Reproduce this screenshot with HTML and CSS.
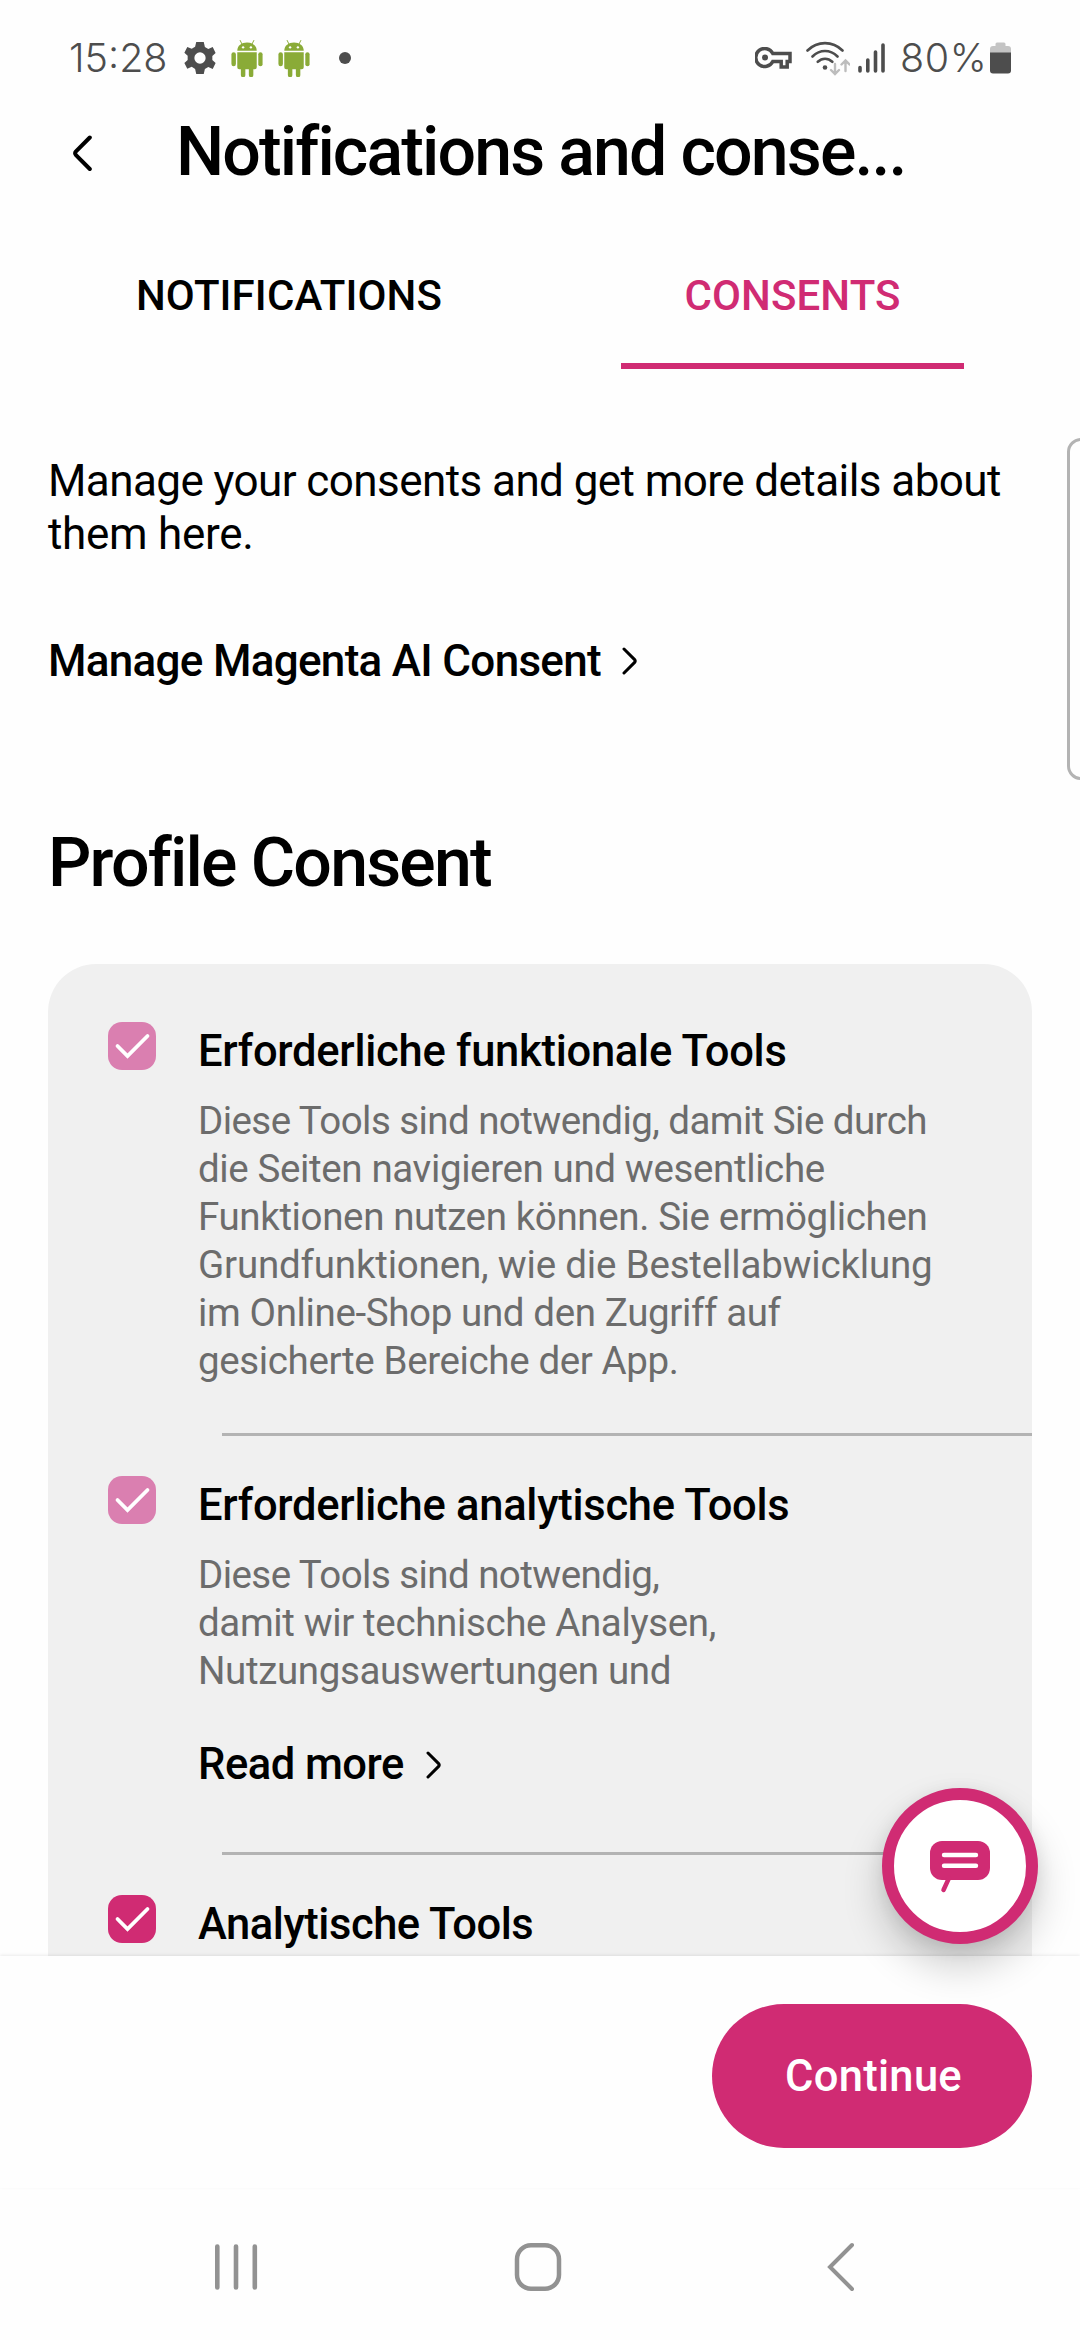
FILE: index.html
```html
<!DOCTYPE html>
<html lang="en">
<head>
<meta charset="utf-8">
<title>Notifications and consents</title>
<link rel="stylesheet" href="styles.css">
</head>
<body>
<div class="screen">
  <div class="status">
    <div class="status-left">
      <span class="clock">15:28</span>
      <svg class="gear" width="32" height="34" viewBox="0 0 34 36" fill="#4d4d4d"><path fill-rule="evenodd" d="M13 1h8l1.200 5.200 3.600 2.200 4.700-2 3.100 6.200-3.500 3.200v4.400l3.500 3.200-3.100 6.200-4.700-2-3.600 2.200L21 35h-8l-1.200-5.400-3.600-2.200-4.700 2L.4 23.200l3.500-3.200v-4.400L.4 12.400l3.100-6.200 4.700 2 3.600-2.200zM17 12a6 6 0 1 0 0 12 6 6 0 0 0 0-12z"/></svg>
      <svg class="droid" width="32" height="37" viewBox="0 0 32 38" fill="#8aab37"><path d="M6 11C6 5.500 10.500 2.500 16 2.500S26 5.500 26 11z"/><path d="M9 .5l2 4M23 .5l-2 4" stroke="#8aab37" stroke-width="1" stroke-linecap="round"/><circle cx="12" cy="7.500" r="1.200" fill="#fff"/><circle cx="20" cy="7.500" r="1.200" fill="#fff"/><path d="M6 12.500h20V28a2 2 0 0 1-2 2H22.500v6a2.300 2.300 0 0 1-4.600 0v-6h-3.600v6a2.300 2.300 0 0 1-4.600 0v-6H8a2 2 0 0 1-2-2z"/><rect y="12.500" width="4.600" height="14.500" rx="2.300"/><rect x="27.600" y="12.500" width="4.400" height="14.500" rx="2.200"/></svg>
      <svg class="droid" width="32" height="37" viewBox="0 0 32 38" fill="#8aab37"><path d="M6 11C6 5.500 10.500 2.500 16 2.500S26 5.500 26 11z"/><path d="M9 .5l2 4M23 .5l-2 4" stroke="#8aab37" stroke-width="1" stroke-linecap="round"/><circle cx="12" cy="7.500" r="1.200" fill="#fff"/><circle cx="20" cy="7.500" r="1.200" fill="#fff"/><path d="M6 12.500h20V28a2 2 0 0 1-2 2H22.500v6a2.300 2.300 0 0 1-4.600 0v-6h-3.600v6a2.300 2.300 0 0 1-4.600 0v-6H8a2 2 0 0 1-2-2z"/><rect y="12.500" width="4.600" height="14.500" rx="2.300"/><rect x="27.600" y="12.500" width="4.400" height="14.500" rx="2.200"/></svg>
      <span class="dot"></span>
    </div>
    <div class="status-right">
      <svg width="37" height="22" viewBox="0 0 37 22" fill="none" stroke="#4d4d4d"><path d="M17.800 6.500H35v8h-2.800v5.600h-6V14.500h-8.400A9 9 0 1 1 17.800 6.500z" stroke-width="3.500"/><circle cx="10" cy="10.500" r="3" fill="#4d4d4d" stroke="none"/></svg>
      <svg class="wifi" width="44" height="36" viewBox="0 0 44 36" fill="none" stroke-linecap="round"><g stroke="#4d4d4d" stroke-width="2.600"><path d="M1.500 10.500C11.500.7 26.500.7 36.500 10.500M6.500 16.500c7.500-7.300 17.500-7.300 25 0M11.800 21.800c4.300-4 10.200-4 14.500 0"/></g><circle cx="19" cy="27.500" r="2.300" fill="#4d4d4d"/><path d="M29 24V33.500M25 30l4 4 4-4M39.500 31V20.500M35.500 24.500l4-4 4 4" stroke="#bdbdbd" stroke-width="2.400"/></svg>
      <svg class="bars" width="27" height="32" viewBox="0 0 27 32" fill="none" stroke="#4d4d4d" stroke-width="3.600" stroke-linecap="round"><path d="M2 25.500V29M9.800 18V29M17.500 10V29M25 3V29"/></svg>
      <span class="percent">80%</span>
      <svg width="21" height="32" viewBox="0 0 21 32"><path fill="#c4c4c4" d="M5.500 4V2a1.500 1.500 0 0 1 1.500-1.500h7A1.500 1.500 0 0 1 15.500 2v2H18a3 3 0 0 1 3 3v4H0V7a3 3 0 0 1 3-3z"/><path fill="#4d4d4d" d="M0 10.500h21v18a3 3 0 0 1-3 3H3a3 3 0 0 1-3-3z"/></svg>
    </div>
  </div>

  <div class="header">
    <svg width="20" height="38" viewBox="0 0 20 38" fill="none" stroke="#000" stroke-width="4" stroke-linecap="round"><path d="M16.800 3.500 3 17.300q-1.700 1.900 0 3.800L16.800 35"/></svg>
    <h1>Notifications and conse...</h1>
  </div>

  <div class="tabs">
    <div class="tab">NOTIFICATIONS</div>
    <div class="tab active">CONSENTS</div>
  </div>

  <div class="content">
    <p class="intro">Manage your consents and get more details about<br><span class="intro-end">them here.</span></p>
    <div class="link manage"><span>Manage Magenta AI Consent</span><svg width="16" height="28" viewBox="0 0 16 28" fill="none" stroke="#000" stroke-width="3" stroke-linecap="round"><path d="M2 2l10.600 10.600q1.200 1.400 0 2.800L2 26"/></svg></div>
    <h2>Profile Consent</h2>

    <div class="card">
      <div class="item first">
        <svg class="check soft" width="48" height="48" viewBox="0 0 48 48"><path d="M9.500 24l10 10L39.500 14" fill="none" stroke="#fff" stroke-width="3.800" stroke-linecap="round"/></svg>
        <div class="text">
          <h3>Erforderliche funktionale Tools</h3>
          <p><span class="tight">Diese Tools sind notwendig, damit Sie durch</span><br>die Seiten navigieren und wesentliche<br>Funktionen nutzen können. Sie ermöglichen<br><span class="wide">Grundfunktionen, wie die Bestellabwicklung</span><br>im Online-Shop und den Zugriff auf<br>gesicherte Bereiche der App.</p>
        </div>
      </div>
      <div class="divider"></div>
      <div class="item more">
        <svg class="check soft" width="48" height="48" viewBox="0 0 48 48"><path d="M9.500 24l10 10L39.500 14" fill="none" stroke="#fff" stroke-width="3.800" stroke-linecap="round"/></svg>
        <div class="text">
          <h3>Erforderliche analytische Tools</h3>
          <p><span class="tight">Diese Tools sind notwendig,</span><br>damit wir technische Analysen,<br>Nutzungsauswertungen und</p>
          <div class="link read"><span>Read more</span><svg width="16" height="28" viewBox="0 0 16 28" fill="none" stroke="#000" stroke-width="3" stroke-linecap="round"><path d="M2 2l10.600 10.600q1.200 1.400 0 2.800L2 26"/></svg></div>
        </div>
      </div>
      <div class="divider"></div>
      <div class="item">
        <svg class="check" width="48" height="48" viewBox="0 0 48 48"><path d="M9.500 24l10 10L39.500 14" fill="none" stroke="#fff" stroke-width="3.800" stroke-linecap="round"/></svg>
        <div class="text analytics"><h3>Analytische Tools</h3></div>
      </div>
    </div>
  </div>

  <div class="footer">
    <div class="button">Continue</div>
  </div>

  <div class="nav">
    <svg width="44" height="50" viewBox="0 0 44 50" fill="none" stroke="#929292" stroke-width="4.600" stroke-linecap="round"><path d="M3.300 4.500v41M22 4.500v41M40.800 4.500v41"/></svg>
    <svg class="home" width="48" height="50" viewBox="0 0 48 50" fill="none" stroke="#929292" stroke-width="4.500"><rect x="3" y="3.200" width="42" height="43.500" rx="14"/></svg>
    <svg width="28" height="50" viewBox="0 0 28 50" fill="none" stroke="#929292" stroke-width="4" stroke-linecap="round"><path d="M25 3 3 25l22 22"/></svg>
  </div>

  <div class="edge-handle"></div>
  <div class="fab">
    <svg width="60" height="52" viewBox="0 0 60 52"><rect width="60" height="39" rx="12" fill="#d02b73"/><path d="M19 37l-5.500 12" stroke="#d02b73" stroke-width="4.500" stroke-linecap="round"/><path d="M14 14h32M14 24.700h32" stroke="#fff" stroke-width="4.400" stroke-linecap="round"/></svg>
  </div>
</div>
</body>
</html>
```
FILE: styles.css
```css
* { box-sizing: border-box; }

body {
  margin: 0;
  background: #fefefe;
  color: #000;
  font-family: Roboto, "Noto Sans", sans-serif;
}

svg { display: block; flex: none; }

h1, h2, h3, p { margin: 0; font-weight: 500; }

.screen {
  position: relative;
  display: flex;
  flex-direction: column;
  width: 1080px;
  height: 2340px;
  overflow: hidden;
}

/* system status bar */
.status {
  display: flex;
  justify-content: space-between;
  align-items: center;
  height: 116px;
  padding: 0 69px;
  color: #4d4d4d;
  font-family: Inter, Roboto, sans-serif;
  font-size: 39.5px;
  font-weight: 300;
}

.status-left, .status-right { display: flex; align-items: center; }
.clock { width: 99px; white-space: nowrap; }
.gear { margin-left: 16px; }
.droid { margin-left: 15px; }
.dot { width: 12px; height: 12px; margin-left: 29px; border-radius: 50%; background: #4d4d4d; }
.wifi { margin-left: 14px; }
.bars { margin-left: 8px; }
.percent { width: 90px; margin-left: 15px; letter-spacing: 0.6px; white-space: nowrap; }

/* app bar */
.header {
  display: flex;
  align-items: center;
  height: 73px;
  padding-left: 73px;
}

h1 {
  margin-left: 83px;
  font-size: 68px;
  line-height: 73px;
  letter-spacing: -1.88px;
  white-space: nowrap;
}

.tabs {
  display: flex;
  gap: 161px;
  height: 180px;
  padding-left: 118px;
}

.tab {
  width: 342px;
  padding-top: 82px;
  font-size: 42px;
  font-weight: 500;
  line-height: 50px;
  letter-spacing: 0.12px;
  text-align: center;
}

.tab.active { width: 343px; color: #d02b73; border-bottom: 6px solid #d02b73; }

.content {
  flex: none;
  height: 1587px;
  padding: 86px 48px 0;
  overflow: hidden;
}

.intro {
  font-size: 44px;
  font-weight: 400;
  line-height: 53px;
  letter-spacing: -0.57px;
  white-space: nowrap;
}

.intro-end { letter-spacing: -0.3px; }

.link { display: flex; align-items: center; font-weight: 500; white-space: nowrap; }

.manage {
  gap: 21px;
  margin-top: 73px;
  font-size: 44px;
  line-height: 54px;
  letter-spacing: -0.7px;
}

h2 {
  margin: 135px 0 61px;
  font-size: 68px;
  line-height: 80px;
  letter-spacing: -1.8px;
}

.card {
  height: 1100px;
  border-radius: 48px;
  background: #f0f0f0;
}

.item { display: flex; gap: 42px; padding: 40px 0 48px 60px; }
.item.first { padding-top: 58px; }
.item.more { padding-bottom: 62px; }

.check { border-radius: 14px; background: #d02b73; }
.check.soft { background: #da7fb0; }

.text { padding-top: 5px; }

h3 {
  font-size: 43.5px;
  line-height: 50px;
  letter-spacing: -0.26px;
  white-space: nowrap;
}

.analytics { letter-spacing: -0.45px; }
.analytics h3 { letter-spacing: inherit; }

.text p {
  margin-top: 20px;
  color: #6c6c6c;
  font-size: 38.5px;
  font-weight: 400;
  line-height: 48px;
  letter-spacing: -0.37px;
  white-space: nowrap;
}

.text .tight { letter-spacing: -0.56px; }
.text .wide { letter-spacing: -0.18px; }

.read {
  gap: 22px;
  margin-top: 45px;
  font-size: 43.5px;
  line-height: 50px;
  letter-spacing: -0.5px;
}

.divider { height: 3px; margin-left: 174px; background: #b3b3b3; }

/* action bar */
.footer {
  display: flex;
  justify-content: flex-end;
  height: 232px;
  padding: 48px 48px 0 0;
  background: #fefefe;
  box-shadow: 0 -1px 3px rgba(0, 0, 0, 0.08);
}

.button {
  width: 320px;
  height: 144px;
  border-radius: 72px;
  background: #d02b73;
  color: #fff;
  font-size: 43.5px;
  font-weight: 500;
  line-height: 145px;
  letter-spacing: 0.3px;
  text-align: center;
  text-indent: 3px;
}

.nav {
  display: flex;
  justify-content: space-between;
  align-items: center;
  height: 152px;
  padding: 6px 225px 0 214px;
}

.home { margin-right: 9px; }

/* side panel handle and chat bubble float over the page */
.edge-handle {
  position: absolute;
  top: 438px;
  left: 1067px;
  width: 30px;
  height: 342px;
  border: 3px solid #b3b3b3;
  border-radius: 14px;
  background: #fefefe;
}

.fab {
  position: absolute;
  top: 1788px;
  left: 882px;
  display: flex;
  align-items: center;
  justify-content: center;
  width: 156px;
  height: 156px;
  padding-top: 1px;
  border: 12px solid #d02b73;
  border-radius: 50%;
  background: #fff;
  box-shadow: 0 22px 40px rgba(0, 0, 0, 0.2), 0 4px 18px rgba(0, 0, 0, 0.08);
}
```
